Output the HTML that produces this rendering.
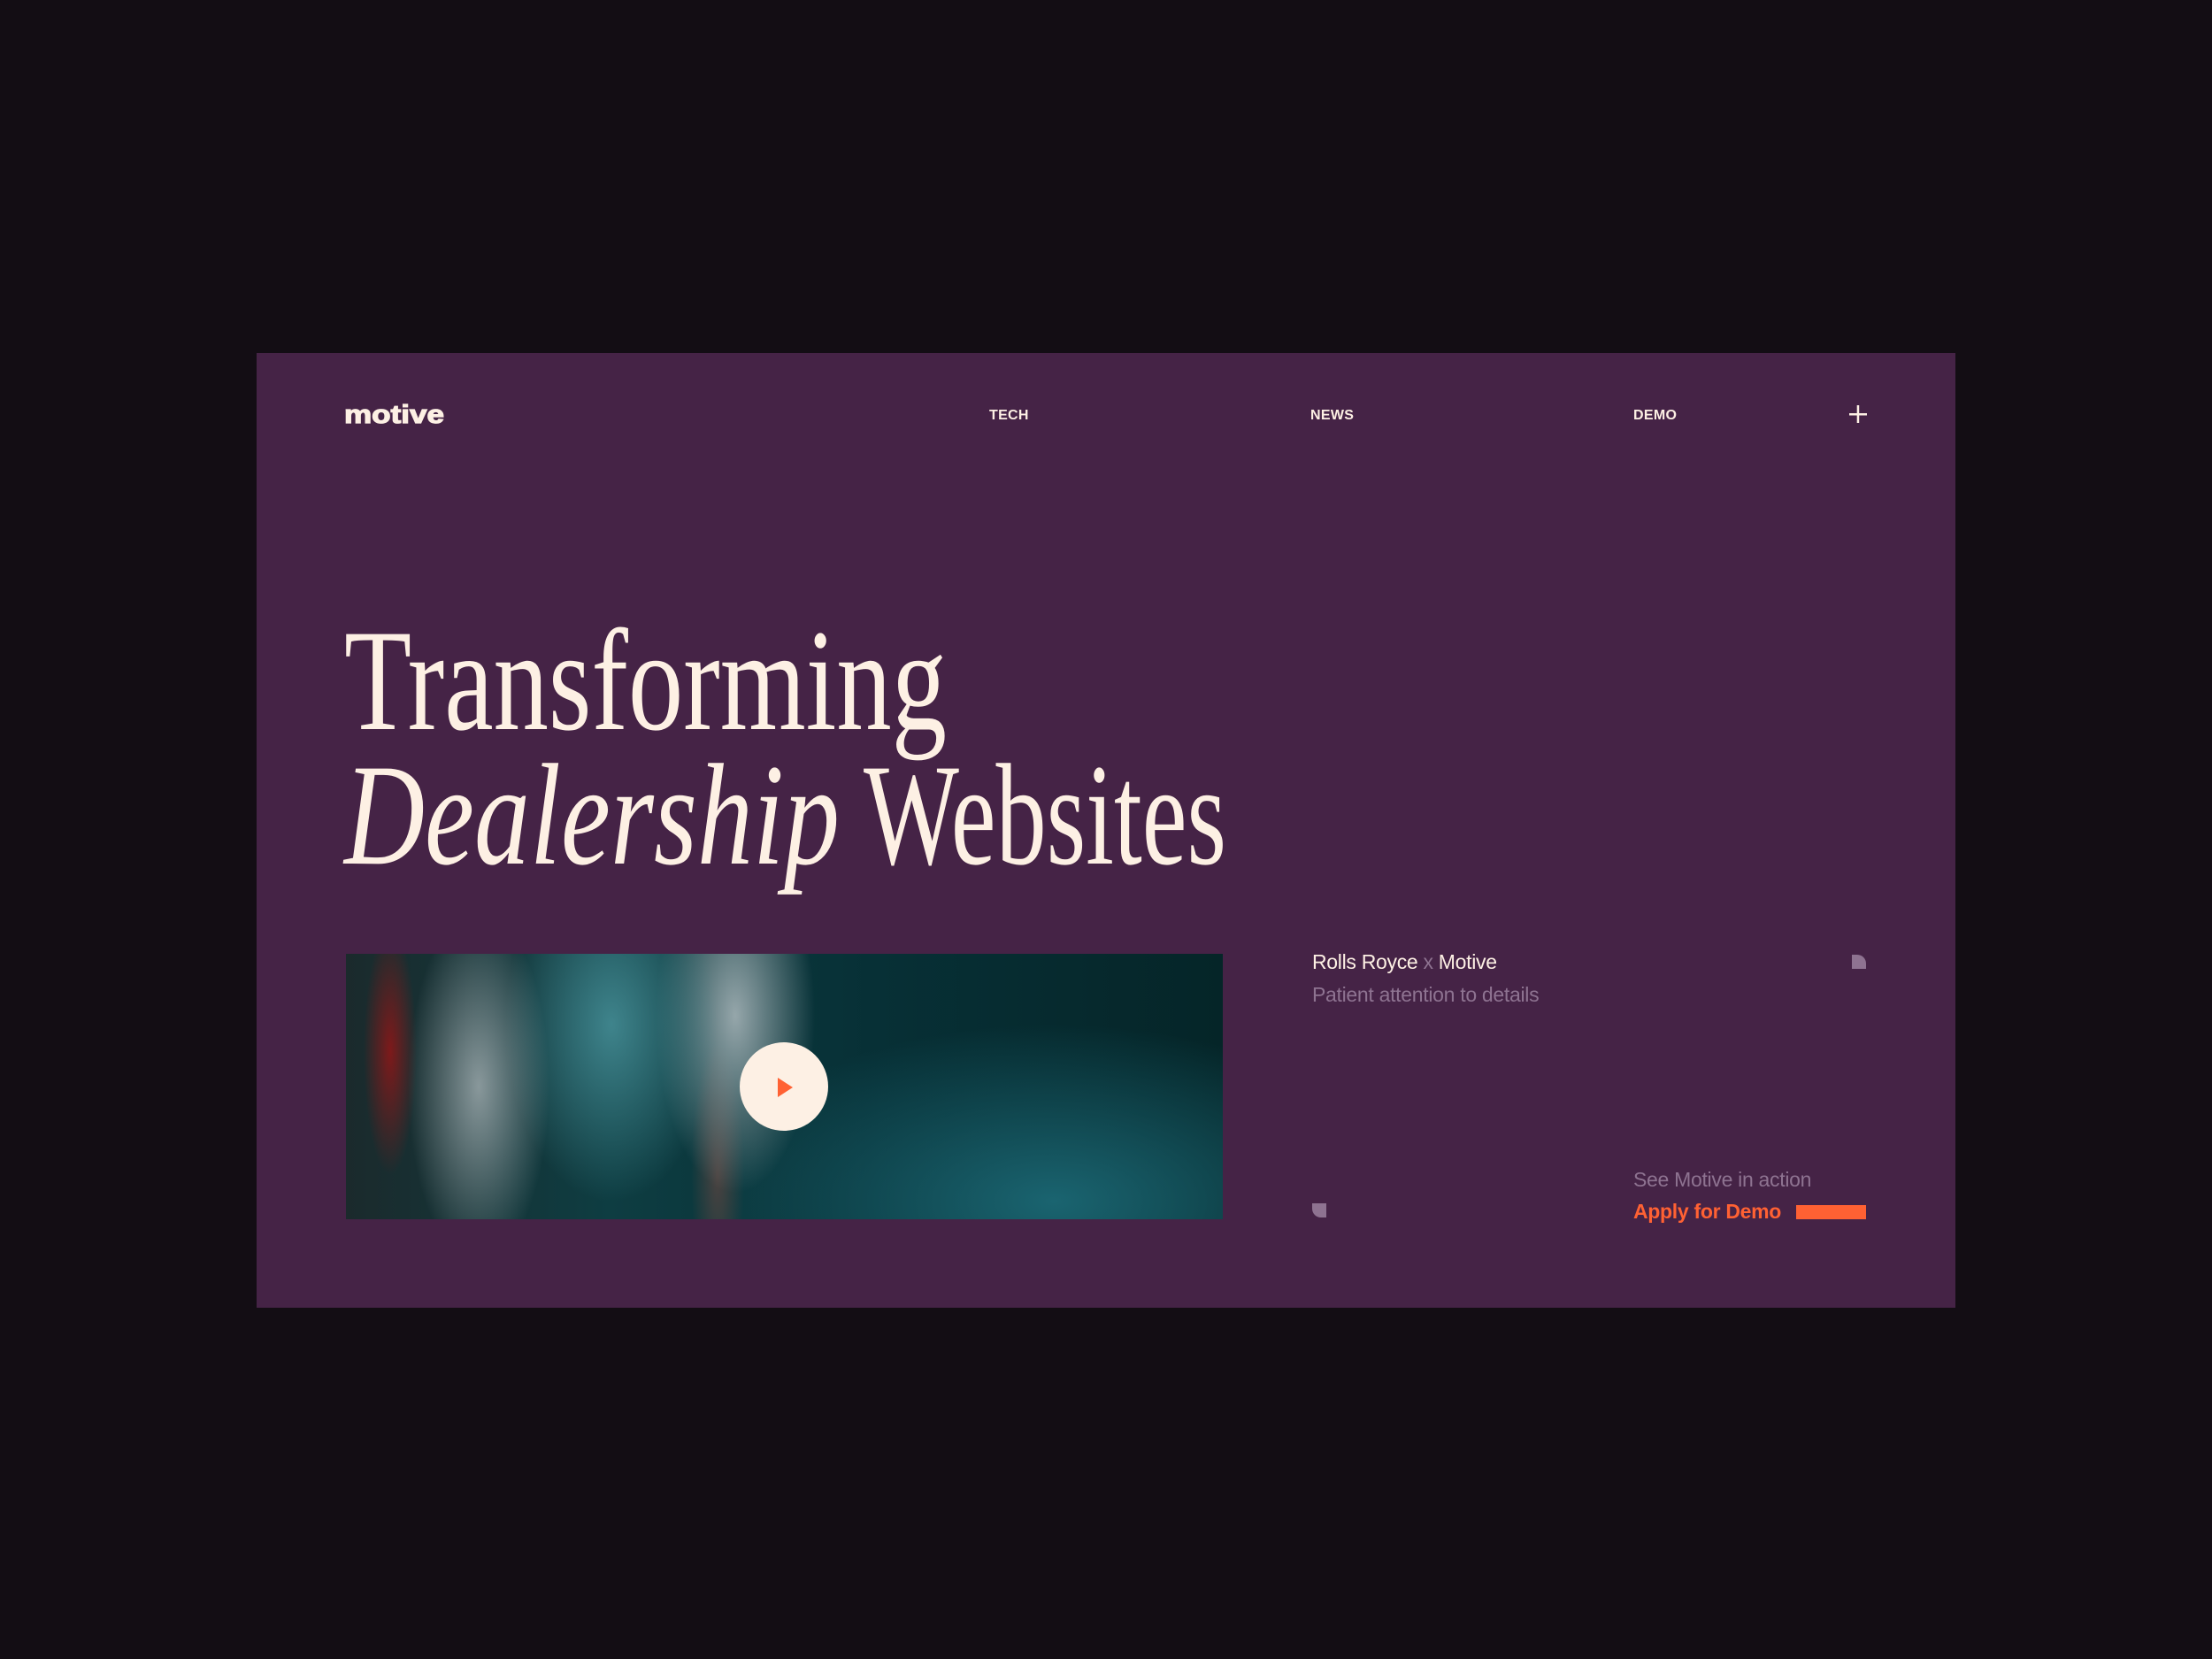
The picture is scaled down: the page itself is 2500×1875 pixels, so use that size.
<!DOCTYPE html>
<html><head><meta charset="utf-8"><style>
html,body{margin:0;padding:0;background:#130d14;width:2500px;height:1875px;overflow:hidden}
.card{position:absolute;left:290px;top:399px;width:1920px;height:1079px;background:#452346}
.nav{position:absolute;top:461px;font:bold 16px "Liberation Sans",sans-serif;color:#fdf0e4;letter-spacing:0.3px}
.t{position:absolute;font-family:"Liberation Sans",sans-serif;font-size:23px;white-space:nowrap;letter-spacing:-0.3px}
.video{position:absolute;left:391px;top:1078px;width:991px;height:300px;overflow:hidden;
background:
radial-gradient(ellipse 30px 140px at 50px 110px,#b01010aa,transparent),
radial-gradient(ellipse 80px 200px at 150px 150px,#c3cacdaa,transparent),
radial-gradient(ellipse 120px 200px at 300px 80px,#3f848c,transparent),
radial-gradient(ellipse 90px 200px at 440px 70px,#b8c2c6cc,transparent),
radial-gradient(ellipse 30px 150px at 420px 250px,#4a4240,transparent),
radial-gradient(ellipse 400px 200px at 800px 280px,#1a6470,transparent),
linear-gradient(90deg,#1b2a2c 0%,#0e3d42 30%,#073036 60%,#052528 100%)}
</style></head><body>
<div class="card"></div>
<svg style="position:absolute;left:0;top:0" width="2500" height="1875">
<text x="389" y="478" font-family="Liberation Sans,sans-serif" font-weight="bold" font-size="29" fill="#fdf0e4" stroke="#fdf0e4" stroke-width="1.2" textLength="113" lengthAdjust="spacingAndGlyphs">motive</text>
<text x="389" y="824" font-family="Liberation Serif,serif" font-size="164" fill="#fdf0e4" textLength="681" lengthAdjust="spacingAndGlyphs">Transforming</text>
<text x="389" y="976" font-family="Liberation Serif,serif" font-style="italic" font-size="164" fill="#fdf0e4" textLength="560" lengthAdjust="spacingAndGlyphs">Dealership</text>
<text x="976" y="976" font-family="Liberation Serif,serif" font-size="164" fill="#fdf0e4" textLength="410" lengthAdjust="spacingAndGlyphs">Websites</text>
<path d="M2093 1079h6a10 10 0 0 1 10 10v6h-16z" fill="#8e7391"/>
<path d="M1483 1360h16v16h-6a10 10 0 0 1 -10 -10z" fill="#8e7391"/>
<rect x="2030" y="1362" width="79" height="16" fill="#ff6133"/>
<rect x="2090" y="467" width="20" height="2.5" fill="#fdf0e4"/>
<rect x="2098.7" y="458" width="2.5" height="20" fill="#fdf0e4"/>
</svg>
<div class="nav" style="left:1118px">TECH</div>
<div class="nav" style="left:1481px">NEWS</div>
<div class="nav" style="left:1846px">DEMO</div>
<div class="video">
<div style="position:absolute;left:445px;top:100px;width:100px;height:100px;border-radius:50%;background:#fdf0e4"></div>
<svg style="position:absolute;left:485px;top:138px" width="24" height="26"><path d="M3 2L20 13L3 24Z" fill="#ff6133"/></svg>
</div>
<div class="t" style="left:1483px;top:1074px;color:#fdf0e4">Rolls Royce <span style="color:#8e7391">x</span> Motive</div>
<div class="t" style="left:1483px;top:1111px;color:#8e7391">Patient attention to details</div>
<div class="t" style="left:1846px;top:1320px;color:#8e7391">See Motive in action</div>
<div class="t" style="left:1846px;top:1356px;color:#ff6133;font-weight:bold">Apply for Demo</div>
</body></html>
